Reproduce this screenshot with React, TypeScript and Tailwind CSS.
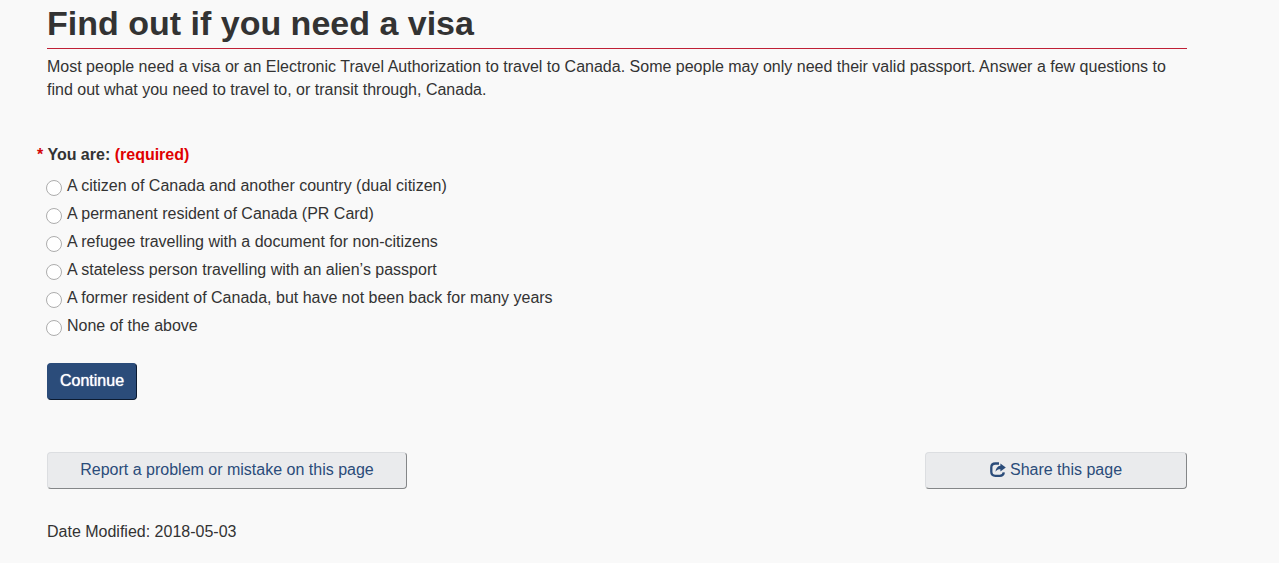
const options = [
  { value: "dual-citizen", label: "A citizen of Canada and another country (dual citizen)" },
  { value: "permanent-resident", label: "A permanent resident of Canada (PR Card)" },
  { value: "refugee", label: "A refugee travelling with a document for non-citizens" },
  { value: "stateless", label: "A stateless person travelling with an alien’s passport" },
  { value: "former-resident", label: "A former resident of Canada, but have not been back for many years" },
  { value: "none", label: "None of the above" },
];

const ShareIcon = () => (
  <svg viewBox="0 0 16 16" className="h-4 w-4 shrink-0" aria-hidden="true">
    <path
      d="M9 1.5H5.4C2.8 1.5 1.3 3 1.3 5.4v4.4c0 2.5 1.5 4 4.1 4h4.4c2.4 0 3.8-1.2 4-3.4"
      fill="none"
      stroke="currentColor"
      strokeWidth="2.3"
    />
    <path d="M10.4 1.4 15.8 5.5 10.4 9.6V7.3C8.3 7.3 6.9 7.9 5.5 9.8c.2-3.4 1.9-5.8 4.9-6.1Z" fill="currentColor" />
  </svg>
);

const VisaForm = () => (
  <form onSubmit={(e) => e.preventDefault()}>
    <fieldset>
      <legend className="-ml-2.5 font-bold">
        <span className="text-[#d3080c]">*</span> You are: <span className="text-[#e00000]">(required)</span>
      </legend>
      <div className="mt-[5px]">
        {options.map((option) => (
          <div key={option.value} className="-ml-px flex h-7 items-center gap-[5px]">
            <input
              type="radio"
              name="applicant"
              id={option.value}
              value={option.value}
              className="mt-1.5 h-4 w-4 shrink-0 appearance-none rounded-full border border-[#adadad] bg-white checked:border-[5px] checked:border-[#2b4c7a]"
            />
            <label htmlFor={option.value}>{option.label}</label>
          </div>
        ))}
      </div>
    </fieldset>
    <button
      type="submit"
      className="mt-6 h-[37px] rounded border border-t-[#2b4c7a] border-r-[#0b1a30] border-b-[#0b1a30] border-l-[#2b4c7a] bg-[#2b4c7a] px-3 pb-0.5 text-white [text-shadow:0_0_1px_#fff]"
    >
      Continue
    </button>
  </form>
);

export default function App() {
  return (
    <div className="min-h-screen bg-[#f9f9f9] pr-[92px] pb-5 pl-[47px] font-['Liberation_Sans',Arial,sans-serif] text-[16px] leading-[23px] text-[#333]">
      <main className="max-w-[1140px]">
        <h1 className="border-b border-[#bf2036] pb-0.5 text-[34px] leading-[46px] font-bold">
          Find out if you need a visa
        </h1>
        <p className="mt-1.5">
          Most people need a visa or an Electronic Travel Authorization to travel to Canada. Some people may only need
          their valid passport. Answer a few questions to find out what you need to travel to, or transit through,
          Canada.
        </p>

        <div className="mt-[42px]">
          <VisaForm />
        </div>

        {/* Page details */}
        <div className="mt-[52px] flex flex-wrap justify-between gap-4 text-[#2b4c7a]">
          <button
            type="button"
            className="h-[37px] w-[360px] rounded border border-t-[#dcdee1] border-r-[#848688] border-b-[#848688] border-l-[#dcdee1] bg-[#eaebed] pb-0.5"
          >
            Report a problem or mistake on this page
          </button>
          <button
            type="button"
            className="flex h-[37px] w-[262px] items-center justify-center gap-1 rounded border border-t-[#dcdee1] border-r-[#848688] border-b-[#848688] border-l-[#dcdee1] bg-[#eaebed] pb-0.5"
          >
            <ShareIcon />
            Share this page
          </button>
        </div>
        <p className="mt-[31px]">
          Date Modified: <time dateTime="2018-05-03">2018-05-03</time>
        </p>
      </main>
    </div>
  );
}
